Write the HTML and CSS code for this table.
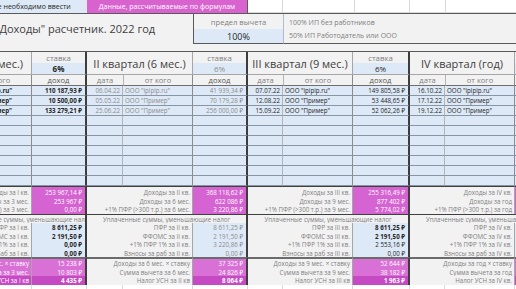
FILE: index.html
```html
<!DOCTYPE html>
<html lang="ru">
<head>
<meta charset="utf-8">
<title>УСН "Доходы" расчетник</title>
<link rel="stylesheet" href="styles.css">
</head>
<body>
<div class="sheet">
  <div class="legend">
    <div class="leg leg-input">Данные, которые необходимо ввести</div>
    <div class="leg leg-calc">Данные, рассчитываемые по формулам</div>
    <div class="leg leg-blank w35"></div>
    <div class="leg leg-blank w72"></div>
    <div class="leg leg-blank w55"></div>
    <div class="leg leg-blank w36"></div>
    <div class="leg leg-blank w100"></div>
  </div>

  <div class="titlebar">
    <div class="title">"Доходы" расчетник. 2022 год</div>
    <div class="limit">
      <div class="limit-head">предел вычета</div>
      <div class="limit-val">100%</div>
    </div>
    <div class="notes">
      <div>100% ИП без работников</div>
      <div>50% ИП Работодатель или ООО</div>
    </div>
  </div>

  <div class="quarters">
    <!-- I квартал -->
    <div class="q q1">
      <div class="qt">I квартал (3 мес.)</div>
      <div class="rh">ставка</div>
      <div class="rv b">6%</div>
      <div class="ch">дата</div><div class="ch chf">от кого</div><div class="ch chv">доход</div>
      <div class="c d"></div><div class="c f b">ООО "ipipip.ru"</div><div class="c v b">110 187,93 ₽</div>
      <div class="c d"></div><div class="c f b">ООО "Пример"</div><div class="c v b">10 500,00 ₽</div>
      <div class="c d"></div><div class="c f b">ООО "Пример"</div><div class="c v b">133 279,21 ₽</div>
      <div class="c d"></div><div class="c f"></div><div class="c v"></div>
      <div class="c d"></div><div class="c f"></div><div class="c v"></div>
      <div class="c d"></div><div class="c f"></div><div class="c v"></div>
      <div class="c d"></div><div class="c f"></div><div class="c v"></div>
      <div class="c d"></div><div class="c f"></div><div class="c v"></div>
      <div class="c d"></div><div class="c f"></div><div class="c v"></div>
      <div class="c d"></div><div class="c f"></div><div class="c v"></div>
      <div class="sl top">Доходы за I кв.</div><div class="sv p1 top">253 967,14 ₽</div>
      <div class="sl">Доходы за 3 мес.</div><div class="sv p1">253 967 ₽</div>
      <div class="sl">+1% ПФР (&gt;300 т.р.) за 3 мес.</div><div class="sv p1">0,00 ₽</div>
      <div class="paid paid-first">Уплаченные суммы, уменьшающие налог</div>
      <div class="sl">ПФР за I кв.</div><div class="sv bl b">8 611,25 ₽</div>
      <div class="sl">ФФОМС за I кв.</div><div class="sv bl b">2 191,50 ₽</div>
      <div class="sl">+1% ПФР 1% за I кв.</div><div class="sv bl b">0,00 ₽</div>
      <div class="sl">Взносы за раб за I кв.</div><div class="sv bl b">0,00 ₽</div>
      <div class="sl top2 lp2">Доходы за 3 мес. × ставку</div><div class="sv p2 top2">15 238 ₽</div>
      <div class="sl lp2">Сумма вычета за 3 мес.</div><div class="sv p2">10 803 ₽</div>
      <div class="sl lp3">Налог УСН за I кв</div><div class="sv p3">4 435 ₽</div>
      <div class="g"></div><div class="g"></div><div class="g"></div>
    </div>

    <!-- II квартал -->
    <div class="q q2">
      <div class="qt">II квартал (6 мес.)</div>
      <div class="rh">ставка</div>
      <div class="rv gr">6%</div>
      <div class="ch">дата</div><div class="ch chf">от кого</div><div class="ch chv">доход</div>
      <div class="c d gr">06.04.22</div><div class="c f gr">ООО "ipipip.ru"</div><div class="c v gr">41 939,34 ₽</div>
      <div class="c d gr">05.05.22</div><div class="c f gr">ООО "Пример"</div><div class="c v gr">70 179,28 ₽</div>
      <div class="c d gr">25.06.22</div><div class="c f gr">ООО "Пример"</div><div class="c v gr">256 000,00 ₽</div>
      <div class="c d"></div><div class="c f"></div><div class="c v"></div>
      <div class="c d"></div><div class="c f"></div><div class="c v"></div>
      <div class="c d"></div><div class="c f"></div><div class="c v"></div>
      <div class="c d"></div><div class="c f"></div><div class="c v"></div>
      <div class="c d"></div><div class="c f"></div><div class="c v"></div>
      <div class="c d"></div><div class="c f"></div><div class="c v"></div>
      <div class="c d"></div><div class="c f"></div><div class="c v"></div>
      <div class="sl top">Доходы за II кв.</div><div class="sv p1 top">368 118,62 ₽</div>
      <div class="sl">Доходы за 6 мес.</div><div class="sv p1">622 086 ₽</div>
      <div class="sl">+1% ПФР (&gt;300 т.р.) за 6 мес.</div><div class="sv p1">3 220,86 ₽</div>
      <div class="paid">Уплаченные суммы, уменьшающие налог</div>
      <div class="sl">ПФР за II кв.</div><div class="sv bl gr">8 611,25 ₽</div>
      <div class="sl">ФФОМС за II кв.</div><div class="sv bl gr">2 191,50 ₽</div>
      <div class="sl">+1% ПФР 1% за II кв.</div><div class="sv bl gr">3 220,86 ₽</div>
      <div class="sl">Взносы за раб за II кв.</div><div class="sv bl gr">0,00 ₽</div>
      <div class="sl top2">Доходы за 6 мес. × ставку</div><div class="sv p2 top2">37 325 ₽</div>
      <div class="sl">Сумма вычета за 6 мес.</div><div class="sv p2">24 826 ₽</div>
      <div class="sl">Налог УСН за II кв</div><div class="sv p3">8 064 ₽</div>
      <div class="g"></div><div class="g"></div><div class="g"></div>
    </div>

    <!-- III квартал -->
    <div class="q q3">
      <div class="qt">III квартал (9 мес.)</div>
      <div class="rh">ставка</div>
      <div class="rv">6%</div>
      <div class="ch">дата</div><div class="ch chf">от кого</div><div class="ch chv">доход</div>
      <div class="c d">07.07.22</div><div class="c f">ООО "ipipip.ru"</div><div class="c v">149 805,58 ₽</div>
      <div class="c d">12.08.22</div><div class="c f">ООО "Пример"</div><div class="c v">53 448,65 ₽</div>
      <div class="c d">15.09.22</div><div class="c f">ООО "Пример"</div><div class="c v">52 062,26 ₽</div>
      <div class="c d"></div><div class="c f"></div><div class="c v"></div>
      <div class="c d"></div><div class="c f"></div><div class="c v"></div>
      <div class="c d"></div><div class="c f"></div><div class="c v"></div>
      <div class="c d"></div><div class="c f"></div><div class="c v"></div>
      <div class="c d"></div><div class="c f"></div><div class="c v"></div>
      <div class="c d"></div><div class="c f"></div><div class="c v"></div>
      <div class="c d"></div><div class="c f"></div><div class="c v"></div>
      <div class="sl top">Доходы за III кв.</div><div class="sv p1 top">255 316,49 ₽</div>
      <div class="sl">Доходы за 9 мес.</div><div class="sv p1">877 402 ₽</div>
      <div class="sl">+1% ПФР (&gt;300 т.р.) за 9 мес.</div><div class="sv p1">5 774,02 ₽</div>
      <div class="paid">Уплаченные суммы, уменьшающие налог</div>
      <div class="sl">ПФР за III кв.</div><div class="sv bl b">8 611,25 ₽</div>
      <div class="sl">ФФОМС за III кв.</div><div class="sv bl b">2 191,50 ₽</div>
      <div class="sl">+1% ПФР 1% за III кв.</div><div class="sv bl">2 553,16 ₽</div>
      <div class="sl">Взносы за раб за III кв.</div><div class="sv bl">0,00 ₽</div>
      <div class="sl top2">Доходы за 9 мес. × ставку</div><div class="sv p2 top2">52 644 ₽</div>
      <div class="sl">Сумма вычета за 9 мес.</div><div class="sv p2">38 182 ₽</div>
      <div class="sl">Налог УСН за III кв</div><div class="sv p3">1 963 ₽</div>
      <div class="g"></div><div class="g"></div><div class="g"></div>
    </div>

    <!-- IV квартал -->
    <div class="q q4">
      <div class="qt">IV квартал (год)</div>
      <div class="rh">ставка</div>
      <div class="rv">6%</div>
      <div class="ch">дата</div><div class="ch chf">от кого</div><div class="ch chv">доход</div>
      <div class="c d">16.10.22</div><div class="c f">ООО "ipipip.ru"</div><div class="c v"></div>
      <div class="c d">17.12.22</div><div class="c f">ООО "Пример"</div><div class="c v"></div>
      <div class="c d">19.12.22</div><div class="c f">ООО "Пример"</div><div class="c v"></div>
      <div class="c d"></div><div class="c f"></div><div class="c v"></div>
      <div class="c d"></div><div class="c f"></div><div class="c v"></div>
      <div class="c d"></div><div class="c f"></div><div class="c v"></div>
      <div class="c d"></div><div class="c f"></div><div class="c v"></div>
      <div class="c d"></div><div class="c f"></div><div class="c v"></div>
      <div class="c d"></div><div class="c f"></div><div class="c v"></div>
      <div class="c d"></div><div class="c f"></div><div class="c v"></div>
      <div class="sl top">Доходы за IV кв.</div><div class="sv p1 top"></div>
      <div class="sl">Доходы за год</div><div class="sv p1"></div>
      <div class="sl">+1% ПФР (&gt;300 т.р.) за год</div><div class="sv p1"></div>
      <div class="paid">Уплаченные суммы, уменьшающие налог</div>
      <div class="sl">ПФР за IV кв.</div><div class="sv bl"></div>
      <div class="sl">ФФОМС за IV кв.</div><div class="sv bl"></div>
      <div class="sl">+1% ПФР 1% за IV кв.</div><div class="sv bl"></div>
      <div class="sl">Взносы за раб за IV кв.</div><div class="sv bl"></div>
      <div class="sl top2">Доходы за год × ставку</div><div class="sv p2 top2"></div>
      <div class="sl">Сумма вычета за год</div><div class="sv p2"></div>
      <div class="sl">Налог УСН за IV кв.</div><div class="sv p3"></div>
      <div class="g"></div><div class="g"></div><div class="g"></div>
    </div>
  </div>
</div>
</body>
</html>
```

FILE: styles.css
```css
* { box-sizing: border-box; margin: 0; padding: 0; }

html, body {
  width: 516px;
  height: 289px;
  overflow: hidden;
  background: #ffffff;
}

body {
  font-family: "Open Sans", "Noto Sans", sans-serif;
  color: #262626;
}

.sheet {
  margin-left: -74px;
  width: 700px;
}

/* legend row */
.legend { display: flex; height: 13px; }
.leg {
  display: flex;
  align-items: center;
  justify-content: center;
  font-size: 7px;
  white-space: nowrap;
  overflow: hidden;
}
.leg-input { width: 161px; background: #dde9f6; color: #262626; }
.leg-calc { width: 161px; background: #d863cf; color: #ffffff; border-right: 1px solid #5a5a5a; }
.leg-blank { border-right: 1px solid #d9d9d9; border-bottom: 1px solid #d9d9d9; }
.w35 { width: 35px; }
.w72 { width: 72px; }
.w55 { width: 55px; }
.w36 { width: 36px; }
.w100 { width: 100px; }

/* title area */
.titlebar {
  display: flex;
  align-items: flex-start;
  height: 38px;
  background: #f2f2f2;
  border-top: 1px solid #595959;
}
.title {
  width: 267px;
  padding-left: 69px;
  font-size: 11px;
  line-height: 30px;
  color: #404040;
  white-space: nowrap;
}
.limit {
  width: 90px;
  height: 30px;
  border-left: 1px solid #595959;
  border-bottom: 1px solid #595959;
}
.limit-head {
  height: 15px;
  display: flex;
  align-items: center;
  justify-content: center;
  font-size: 7.6px;
  color: #7f7f7f;
}
.limit-val {
  height: 14px;
  display: flex;
  align-items: center;
  justify-content: center;
  font-size: 9px;
  background: #dde9f6;
  color: #1f1f1f;
}
.notes {
  flex: 1;
  height: 30px;
  border-bottom: 1px solid #595959;
  border-left: 1px solid #a9bdd3;
  padding: 2px 0 0 5px;
  font-size: 7px;
  line-height: 13px;
  color: #7f7f7f;
  white-space: nowrap;
}

/* quarters */
.quarters {
  display: flex;
  border-top: 1px solid #595959;
}
.q {
  display: grid;
  grid-template-rows: 11px 12px 11px repeat(10, 10px) 11px 8px 9px 9px 9px 8px 9px 8px 11px 8px 9px 10px;
}
.q1, .q2 { grid-template-columns: 36px 70px 55px; }
.q3 { grid-template-columns: 35px 70px 57px; }
.q4 { grid-template-columns: 35px 70px 56px; }

.q > div {
  display: flex;
  align-items: center;
  white-space: nowrap;
  overflow: hidden;
  font-size: 6.2px;
}

.qt {
  grid-column: span 2;
  grid-row: span 2;
  justify-content: center;
  background: #f2f2f2;
  color: #404040;
  border-right: 1px solid #a6a6a6;
  border-bottom: 1px solid #a6a6a6;
}
.q > .qt { font-size: 11px; }

.rh, .rv, .chv, .v, .sv, .paid { border-right: 2px solid #3d3d3d; }

.rh { justify-content: center; background: #f2f2f2; color: #808080; }
.q > .rh { font-size: 7.8px; }
.rv { justify-content: center; background: #dde9f6; border-bottom: 1px solid #a6a6a6; }
.q > .rv { font-size: 8px; }

.ch {
  justify-content: center;
  background: #f2f2f2;
  color: #808080;
  border-bottom: 1px solid #6e6e6e;
}
.q > .ch { font-size: 7.6px; }
.q > .chv { color: #595959; }
.chf { border-left: 1px solid #b5b5b5; border-right: 1px solid #8c8c8c; }

.c { background: #dde9f6; border-bottom: 1px solid #8795a4; }
.d { justify-content: flex-end; padding-right: 2px; border-right: 1px solid #b5b5b5; }
.f { padding-left: 2px; border-right: 1px solid #8c8c8c; }
.v { justify-content: flex-end; padding-right: 3px; }

/* summary */
.sl {
  grid-column: span 2;
  justify-content: flex-end;
  padding-right: 2px;
  background: #f2f2f2;
  color: #7f7f7f;
  border-right: 1px solid #a6a6a6;
}
.sv { justify-content: flex-end; padding-right: 3px; }
.bl { background: #dde9f6; }
.p1 { background: #d563d1; color: #ffffff; }
.p2 { background: #d970d6; color: #ffffff; }
.p3 { background: #c64ac4; color: #ffffff; font-weight: 700; }
.lp2 { background: #d970d6; color: #ffffff; }
.lp3 { background: #c64ac4; color: #ffffff; }

.top { border-top: 1px solid #404040; }
.top2 { border-top: 2px solid #6b6b6b; }

.paid {
  grid-column: span 3;
  justify-content: center;
  background: #f2f2f2;
  color: #7f7f7f;
  border-top: 1px solid #404040;
}
.paid-first { padding-left: 44px; }

.g { background: #ffffff; border-right: 1px solid #dadada; }

.gr { color: #8c8c8c; }
.b { font-weight: 700; }
```
